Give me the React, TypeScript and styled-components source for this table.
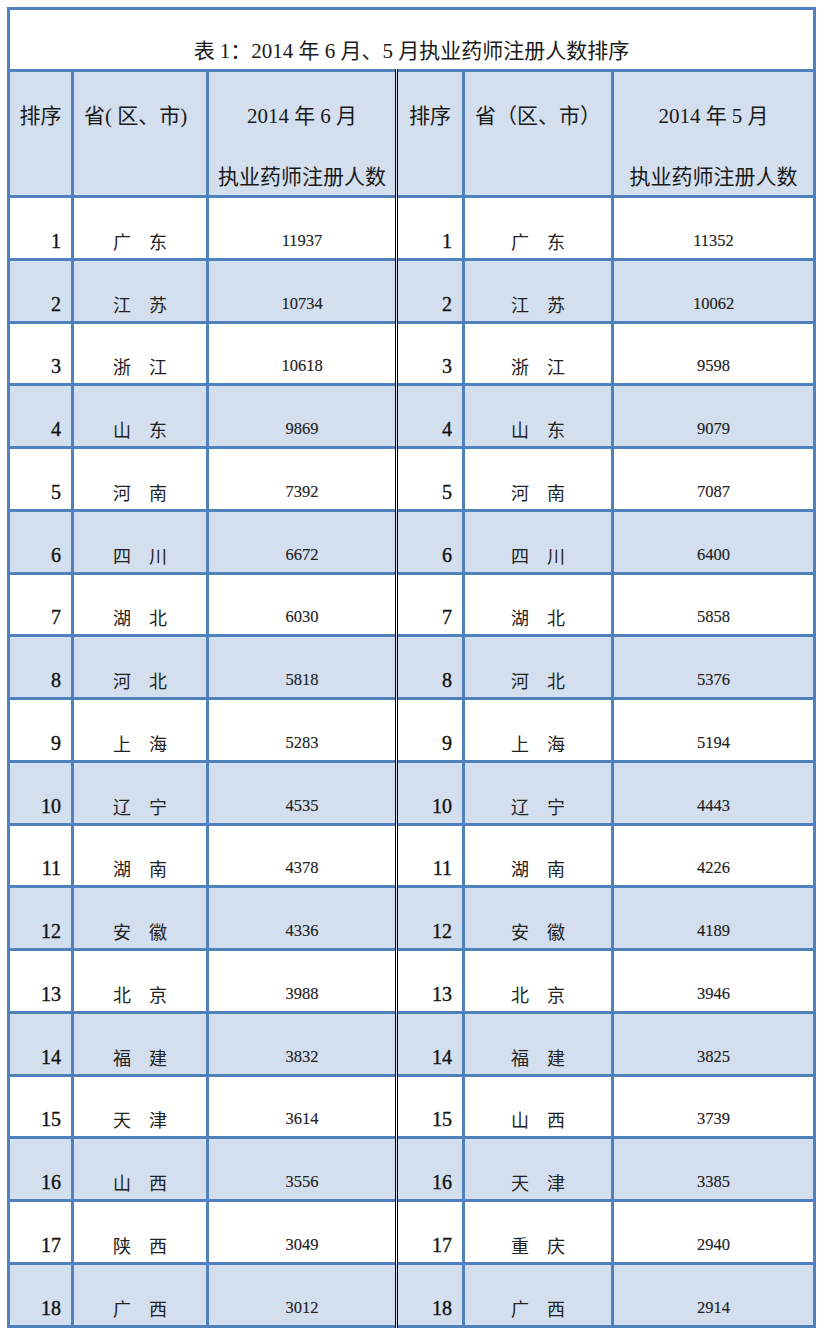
import React from 'react';
import styled, { createGlobalStyle } from 'styled-components';

const GlobalStyle = createGlobalStyle`
  html, body {
    margin: 0;
    padding: 0;
    background: #ffffff;
  }
  body {
    font-family: "Liberation Serif", "Noto Sans CJK SC", serif;
    color: #111111;
  }
`;

const Page = styled.div`
  padding: 7px 0 0 7px;
`;

const Table = styled.table`
  width: 806px;
  table-layout: fixed;
  border-collapse: collapse;
  border: 3px solid #4f81bd;
`;

const Row = styled.tr<{ $shade?: boolean }>`
  background: ${(p) => (p.$shade ? '#d3dfee' : '#ffffff')};
`;

const TitleCell = styled.td`
  height: 54px;
  padding: 0 0 5px;
  border: 3px solid #4f81bd;
  vertical-align: bottom;
  text-align: center;
  font-size: 21px;
  line-height: 26px;
  color: #1a1a1a;
`;

const HeadCell = styled.th<{ $align?: 'left' | 'center'; $split?: boolean }>`
  height: 94px;
  padding: ${(p) => (p.$align === 'left' ? '29px 0 0 10px' : '29px 0 0')};
  border: 3px solid #4f81bd;
  ${(p) => (p.$split ? 'border-left: 3px double #000000;' : '')}
  vertical-align: top;
  text-align: ${(p) => p.$align ?? 'center'};
  font-size: 21px;
  font-weight: normal;
  line-height: 30px;
  white-space: nowrap;
  color: #1a1a1a;
`;

const HeadLine = styled.div`
  height: 30px;
  & + & {
    margin-top: 31px;
  }
`;

const Cell = styled.td<{ $split?: boolean }>`
  height: 54.78px;
  padding: 0 0 5px;
  border: 3px solid #4f81bd;
  ${(p) => (p.$split ? 'border-left: 3px double #000000;' : '')}
  vertical-align: bottom;
  line-height: 24px;
  white-space: nowrap;
  color: #1a1a1a;
`;

const RankCell = styled(Cell)`
  padding-right: 10px;
  text-align: right;
  font-size: 20px;
  color: #111111;
  -webkit-text-stroke: 0.35px #111111;
`;

const NameCell = styled(Cell)`
  text-align: center;
  font-family: "Noto Sans CJK SC", sans-serif;
  font-size: 18px;
  color: #222222;
`;

const CountCell = styled(Cell)`
  text-align: center;
  font-size: 16.5px;
  color: #222222;
  -webkit-text-stroke: 0.15px #222222;
`;

type Entry = [string, number];

const june: Entry[] = [
  ['广东', 11937], ['江苏', 10734], ['浙江', 10618], ['山东', 9869],
  ['河南', 7392], ['四川', 6672], ['湖北', 6030], ['河北', 5818],
  ['上海', 5283], ['辽宁', 4535], ['湖南', 4378], ['安徽', 4336],
  ['北京', 3988], ['福建', 3832], ['天津', 3614], ['山西', 3556],
  ['陕西', 3049], ['广西', 3012],
];

const may: Entry[] = [
  ['广东', 11352], ['江苏', 10062], ['浙江', 9598], ['山东', 9079],
  ['河南', 7087], ['四川', 6400], ['湖北', 5858], ['河北', 5376],
  ['上海', 5194], ['辽宁', 4443], ['湖南', 4226], ['安徽', 4189],
  ['北京', 3946], ['福建', 3825], ['山西', 3739], ['天津', 3385],
  ['重庆', 2940], ['广西', 2914],
];

// two-character names are printed with a full-width space between them
const spaced = (name: string) => name.split('').join('\u3000');

const App: React.FC = () => (
  <Page>
    <GlobalStyle />
    <Table>
      <colgroup>
        <col style={{ width: 64 }} />
        <col style={{ width: 135 }} />
        <col style={{ width: 189 }} />
        <col style={{ width: 67 }} />
        <col style={{ width: 149 }} />
        <col style={{ width: 202 }} />
      </colgroup>
      <tbody>
        <Row>
          <TitleCell colSpan={6}>表 1：2014 年 6 月、5 月执业药师注册人数排序</TitleCell>
        </Row>
        <Row $shade>
          <HeadCell>排序</HeadCell>
          <HeadCell $align="left">省( 区、市)</HeadCell>
          <HeadCell>
            <HeadLine>2014 年 6 月</HeadLine>
            <HeadLine>执业药师注册人数</HeadLine>
          </HeadCell>
          <HeadCell $split>排序</HeadCell>
          <HeadCell $align="left">省（区、市）</HeadCell>
          <HeadCell>
            <HeadLine>2014 年 5 月</HeadLine>
            <HeadLine>执业药师注册人数</HeadLine>
          </HeadCell>
        </Row>
        {june.map(([name, count], i) => (
          <Row key={name + i} $shade={i % 2 === 1}>
            <RankCell>{i + 1}</RankCell>
            <NameCell>{spaced(name)}</NameCell>
            <CountCell>{count}</CountCell>
            <RankCell $split>{i + 1}</RankCell>
            <NameCell>{spaced(may[i][0])}</NameCell>
            <CountCell>{may[i][1]}</CountCell>
          </Row>
        ))}
      </tbody>
    </Table>
  </Page>
);

export default App;
